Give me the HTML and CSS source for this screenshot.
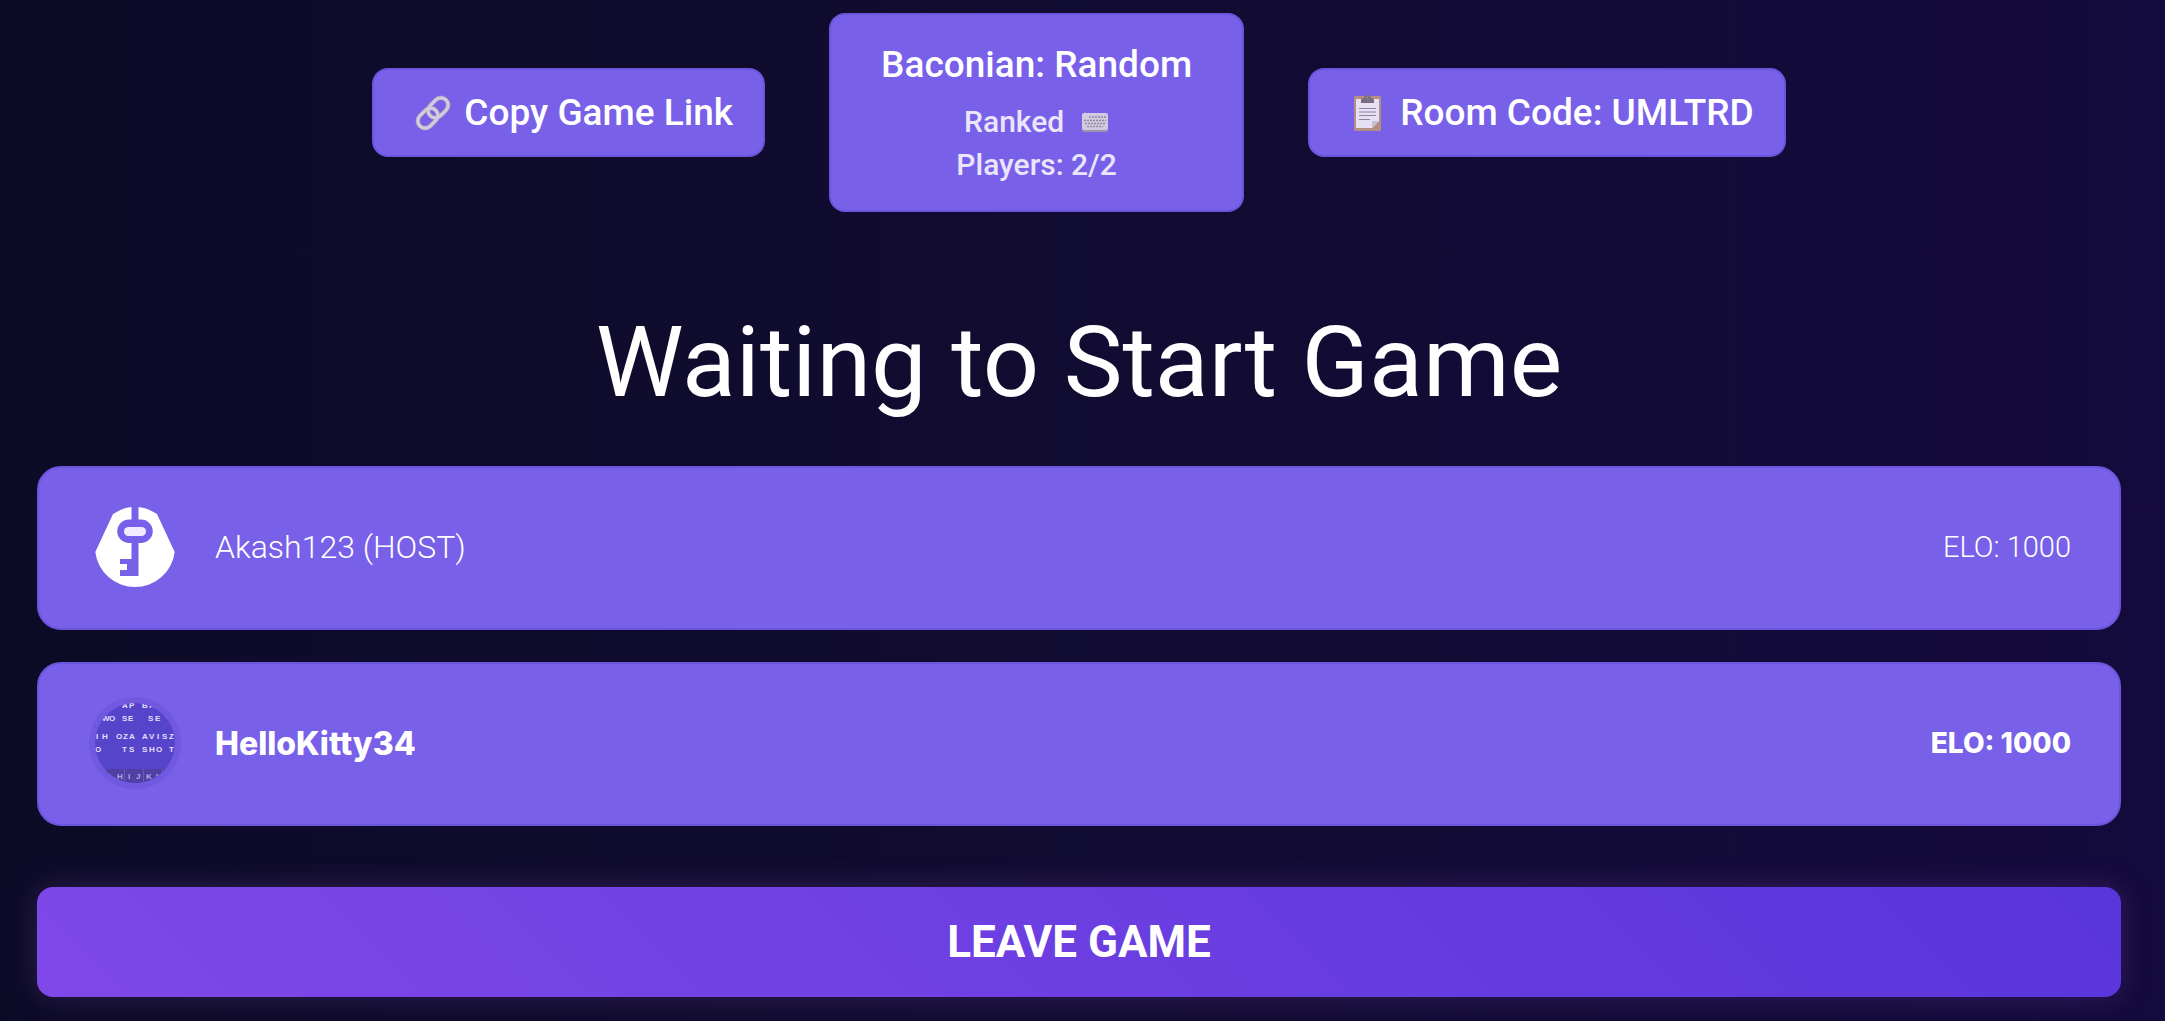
FILE: index.html
```html
<!DOCTYPE html>
<html lang="en">
<head>
<meta charset="utf-8">
<meta name="viewport" content="width=device-width, initial-scale=1">
<title>Waiting to Start Game</title>
<link rel="stylesheet" href="styles.css">
</head>
<body>
<main class="lobby">
  <header class="topbar">
    <button class="chip" type="button">
      <svg class="chip-icon" viewBox="1 1 34 34" aria-hidden="true">
        <g fill="none" transform="rotate(-45 18 18)">
          <g stroke="#a59fb5" stroke-width="4">
            <rect x="1.5" y="11.5" width="20" height="13" rx="6.5"/>
            <rect x="14.5" y="11.5" width="20" height="13" rx="6.5"/>
          </g>
          <g stroke="#d2cce0" stroke-width="2.8">
            <rect x="1.5" y="11.5" width="20" height="13" rx="6.5"/>
            <rect x="14.5" y="11.5" width="20" height="13" rx="6.5"/>
          </g>
        </g>
      </svg>
      <span>Copy Game Link</span>
    </button>
    <section class="info">
      <h2 class="info-title">Baconian: Random</h2>
      <p class="info-line">
        <span>Ranked</span>
        <svg class="keyboard" viewBox="0 0 28 20" aria-hidden="true">
          <path d="M4 2V0" stroke="#aaa4bf" fill="none"/>
          <rect x="1" y="3" width="26" height="17" rx="2" fill="#9a92ae"/>
          <rect x="1" y="1" width="26" height="17" rx="2" fill="#d0cbde"/>
          <g stroke="#8d87a0" stroke-width="1.6" stroke-dasharray="2 1">
            <path d="M8 5H25M3 8.500H25M4 11.500H24M6 14.500H22"/>
          </g>
        </svg>
      </p>
      <p class="info-line">Players: 2/2</p>
    </section>
    <button class="chip" type="button">
      <svg class="chip-icon" viewBox="-3 0 38 38" aria-hidden="true">
        <rect x="1" y="2" width="27" height="35" rx="1.500" fill="#b58f81"/>
        <path d="M3 5H26V27L19 34H3Z" fill="#e6e1f2"/>
        <path d="M26 27L19 34V27Z" fill="#c5bfd2"/>
        <path d="M8 9V6Q8 4 11 4Q11 1 14.500 1T18 4Q21 4 21 6V9Z" fill="#796d86"/>
        <circle cx="14.500" cy="3.500" r="1" fill="#b58f81"/>
        <path d="M6 14.500H23M6 18H23M6 21.500H23M6 25.500H17" stroke="#8b84a6" stroke-width="1.200"/>
      </svg>
      <span>Room Code: UMLTRD</span>
    </button>
  </header>

  <h1 class="title">Waiting to Start Game</h1>

  <ul class="players">
    <li class="player">
      <svg class="avatar" viewBox="0 0 92 92" role="img" aria-label="Key avatar">
        <path d="M42.500 6A40 40 0 0 0 24 13L6.300 51A40 40 0 0 0 85.700 51L68 13A40 40 0 0 0 49.500 6V18.500H52A11.500 11.500 0 0 1 52 42H49.500V75H31V69H38V63H31V58H42.500V42H40A11.500 11.500 0 0 1 40 18.500H42.500Z" fill="#fff"/>
        <rect x="35" y="26" width="22" height="9" rx="4.500" fill="#f1ebff"/>
      </svg>
      <span class="player-name">Akash123 (HOST)</span>
      <span class="player-elo">ELO: 1000</span>
    </li>
    <li class="player player-self">
      <svg class="avatar" viewBox="0 0 92 92" role="img" aria-label="Cipher avatar">
        <defs><clipPath id="disc"><circle cx="46" cy="46" r="40"/></clipPath></defs>
        <circle cx="46" cy="46" r="46" fill="#7058df"/>
        <g clip-path="url(#disc)">
          <rect width="92" height="92" fill="#5645cb"/>
          <rect y="72" width="92" height="20" fill="#5140a4"/>
          <path d="M16.500 72V92M35.500 72V92M54.500 72V92M73.500 72V92" stroke="#6b5bb8"/>
          <g class="cipher">
            <text x="33 40 53 60" y="11">APBA</text>
            <text x="13 20 33 39 59 66" y="24">WOSESE</text>
            <text x="7 13 27 34 40 53 60 68 73 80 86" y="42">IHOZAAVISZ.</text>
            <text x="6 33 40 53 60 67 80" y="55">OTSSHOT</text>
            <text class="cipher-dim" x="28 39 47 57 67" y="82">HIJKL</text>
          </g>
        </g>
      </svg>
      <span class="player-name">HelloKitty34</span>
      <span class="player-elo">ELO: 1000</span>
    </li>
  </ul>

  <button class="leave" type="button">LEAVE GAME</button>
</main>
</body>
</html>
```
FILE: styles.css
```css
* {
  box-sizing: border-box;
}

body {
  margin: 0;
  min-height: 100vh;
  background: linear-gradient(90deg, #0c0b27, #110c31 50%, #140a3d);
  color: #fff;
  font-family: Roboto, "Open Sans", sans-serif;
}

.lobby {
  padding: 13px 44px 24px 37px;
}

.topbar {
  display: flex;
  justify-content: center;
  align-items: center;
  gap: 64px;
}

.chip,
.info {
  border: 2px solid #6c54dc;
  border-radius: 16px;
  background: #7860e8;
  color: #fff;
}

.chip {
  display: flex;
  align-items: center;
  gap: 12px;
  padding: 20px 30px 20px 40px;
  font: 500 37px/45px Roboto, sans-serif;
  white-space: nowrap;
  cursor: pointer;
}

.chip-icon {
  flex: none;
  width: 38px;
  height: 38px;
}

.info {
  padding: 29px 50px 24px;
  text-align: center;
  white-space: nowrap;
}

.info-title {
  margin: 0 0 14px;
  font-size: 37px;
  font-weight: 500;
  line-height: 42px;
}

.info-line {
  display: flex;
  justify-content: center;
  align-items: center;
  gap: 17px;
  margin: 0;
  color: #eae5fb;
  font-size: 30px;
  font-weight: 500;
  line-height: 43px;
}

.keyboard {
  width: 28px;
  height: 20px;
}

.title {
  margin: 92px 0 46px;
  font-size: 99px;
  font-weight: 400;
  line-height: 116px;
  text-align: center;
}

.players {
  display: flex;
  flex-direction: column;
  gap: 32px;
  margin: 0;
  padding: 0;
  list-style: none;
}

.player {
  display: flex;
  align-items: center;
  gap: 34px;
  padding: 33px 48px 35px 50px;
  border: 2px solid #6c54dc;
  border-radius: 24px;
  background: #7860e8;
  font-size: 32px;
  font-weight: 300;
}

.player-self {
  font-family: Inter, sans-serif;
  font-weight: 800;
}

.avatar {
  flex: none;
  width: 92px;
  height: 92px;
}

.cipher {
  fill: #e6defd;
  font: 700 8px "Liberation Sans", sans-serif;
}

.cipher-dim {
  fill: #b5aade;
}

.player-elo {
  margin-left: auto;
  font-size: 29px;
}

.player-self .player-elo {
  font-size: 28px;
}

.leave {
  display: block;
  width: 100%;
  margin-top: 61px;
  padding: 31px;
  border: 0;
  border-radius: 16px;
  background: linear-gradient(45deg, #8048e8, #5835db);
  box-shadow: 0 0 30px rgba(128, 72, 180, 0.3);
  color: #fff;
  font: 700 44px/48px Roboto, sans-serif;
  cursor: pointer;
}
```
